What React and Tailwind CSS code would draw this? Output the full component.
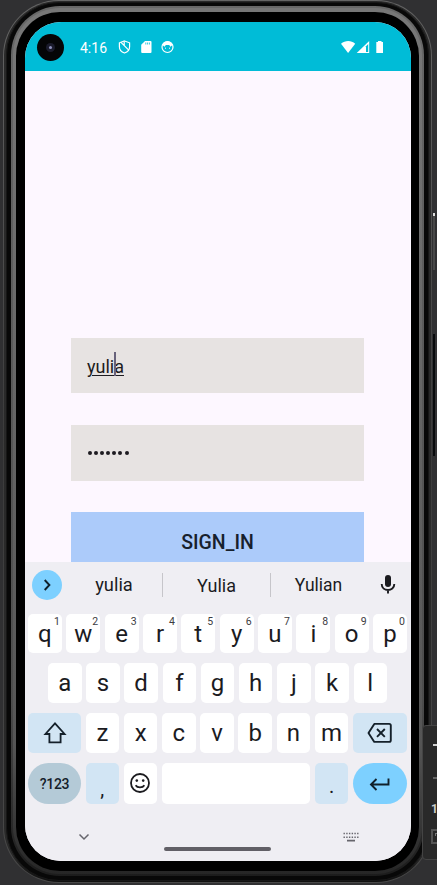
import React from "react";

const hints = ["1", "2", "3", "4", "5", "6", "7", "8", "9", "0"];

function Key({ label, hint, className = "" }) {
  return (
    <div className={`relative flex h-full flex-1 items-center justify-center rounded-[5px] bg-white text-[24px] leading-none text-[#1b1b1f] ${className}`}>
      <span className={hint ? "pt-px" : "pb-px"}>{label}</span>
      {hint && <span className="absolute right-[2px] top-[2px] text-[10.5px] leading-[11px] text-[#3c3c42]">{hint}</span>}
    </div>
  );
}

function StatusBar() {
  return (
    <div className="flex h-[49px] shrink-0 items-center bg-[#00bcd7] pl-[12px] text-white">
      <div className="mt-[2px] flex size-[27px] items-center justify-center rounded-full bg-[#050507]">
        <div className="flex size-[9px] items-center justify-center rounded-full bg-[#1b1b2c]">
          <div className="size-[3px] rounded-full bg-[#8f91bd]" />
        </div>
      </div>
      <span className="ml-[16px] mt-[3px] w-[28px] whitespace-nowrap text-[14px] leading-none">4:16</span>
      <svg className="ml-[10px]" width="13" height="14" viewBox="0 0 13 14" fill="none" stroke="currentColor" strokeWidth="1.2">
        <path d="M6.5 1L11.6 2.8V6.8C11.6 9.8 9.5 12 6.5 13C3.5 12 1.4 9.8 1.4 6.8V2.8Z" />
        <path d="M3 2.3L11 10.3M6.2 1.6V5.2" />
      </svg>
      <svg className="ml-[9.5px]" width="11" height="14" viewBox="0 0 11 14">
        <path fill="currentColor" d="M4 1H9.5Q10.5 1 10.5 2V12Q10.5 13 9.5 13H1.2Q.2 13 .2 12V4.7Z" />
        <path stroke="#00bcd7" strokeWidth=".8" d="M4.8 2.5V4.5M6.6 2.5V4.5M8.4 2.5V4.5" />
      </svg>
      <svg className="ml-[9.5px]" width="13" height="14" viewBox="0 0 13 14" fill="none" stroke="currentColor">
        <circle cx="6.5" cy="7" r="5.5" strokeWidth="1.2" />
        <path fill="currentColor" stroke="none" d="M1.4 5C2.5 2.5 4.2 1.3 6.5 1.3S10.5 2.5 11.6 5L9.4 6.7L8.2 5H4.8L3.6 6.7Z" />
        <path d="M4 8.2H5M8 8.2H9" />
      </svg>
      <svg className="ml-[167px]" width="44" height="14" viewBox="0 0 44 14" fill="currentColor">
        <path d="M0 3.7C4.2.2 10.2.2 14.2 3.7L7.1 12.9Z" />
        <path d="M28.2 1V13H15.7Z" />
        <path d="M25 6.2L27.2 4V12H25Z" fill="#00bcd7" />
        <path d="M37 1H40.5V2H42V13H35.3V2H37Z" />
      </svg>
    </div>
  );
}

function Keyboard() {
  return (
    <div className="flex h-[299px] shrink-0 flex-col bg-[#efeef3] pl-[3px] pr-[4px] pt-px text-[#1b1b1f]">
      <div className="flex h-[44px] items-center">
        <div className="ml-[4px] flex size-[30px] shrink-0 items-center justify-center rounded-full bg-[#7dd0ff]">
          <svg width="30" height="30" viewBox="0 0 30 30" fill="none" stroke="#10202b" strokeWidth="1.9"><path d="M12.7 10L17.4 15L12.7 20" /></svg>
        </div>
        <div className="flex h-[24px] w-[101px] items-center justify-center border-r border-[#c6c5ca] pl-[4px] text-[18.3px]">yulia</div>
        <div className="flex h-[24px] w-[108px] items-center justify-center border-r border-[#c6c5ca] text-[18px]">Yulia</div>
        <div className="flex h-[24px] w-[95px] items-center justify-center text-[17.5px]">Yulian</div>
        <svg className="ml-[12px] shrink-0" width="20" height="22" viewBox="0 0 20 22" fill="none" stroke="#1b1b1f" strokeWidth="1.9">
          <rect x="7" y="1" width="6" height="12" rx="3" fill="#1b1b1f" stroke="none" />
          <path d="M3.7 10C3.7 17.9 16.3 17.9 16.3 10M10 15.5V19.5" />
        </svg>
      </div>
      <div className="mt-[7px] flex h-[39px] gap-[4.5px]">
        {"qwertyuiop".split("").map((letter, i) => <Key key={letter} label={letter} hint={hints[i]} />)}
      </div>
      <div className="mt-[10px] flex h-[40px] gap-[4.7px] px-[20px]">
        {"asdfghjkl".split("").map((letter) => <Key key={letter} label={letter} />)}
      </div>
      <div className="mt-[10px] flex h-[40px] gap-[4.6px]">
        <div className="flex w-[53px] items-center justify-center rounded-[5px] bg-[#d2e5f4]">
          <svg width="24" height="24" viewBox="0 0 24 24" fill="none" stroke="#14202a" strokeWidth="1.8"><path d="M12 2.3L21.6 13H17.6V21.4H6.4V13H2.4Z" /></svg>
        </div>
        {"zxcvbnm".split("").map((letter) => <Key key={letter} label={letter} />)}
        <div className="flex w-[54px] items-center justify-center rounded-[5px] bg-[#d2e5f4]">
          <svg width="26" height="22" viewBox="0 0 26 22" fill="none" stroke="#14202a" strokeWidth="1.9">
            <path d="M7.3 1.9H22.2Q23.8 1.9 23.8 3.5V18.3Q23.8 19.9 22.2 19.9H7.3L1.5 10.9Z" strokeLinejoin="round" />
            <path d="M10 7L17.8 14.8M17.8 7L10 14.8" />
          </svg>
        </div>
      </div>
      <div className="mt-[10px] flex h-[41px] gap-[4.6px]">
        <div className="flex w-[53px] items-center justify-center rounded-full bg-[#b4cad7] pt-px text-[14px] font-medium tracking-[-0.35px] text-[#14202a]">?123</div>
        <div className="flex w-[33.4px] items-center justify-center rounded-[5px] bg-[#d2e5f4] pt-[11px] text-[20px]">,</div>
        <div className="flex w-[33.4px] items-center justify-center rounded-[5px] bg-white">
          <svg className="mb-px" width="22" height="22" viewBox="0 0 22 22" fill="none" stroke="#1b1b1f" strokeWidth="1.8">
            <circle cx="11" cy="11" r="9" /><path d="M6.6 13.2C8.4 16.1 13.6 16.1 15.4 13.2" />
            <circle cx="7.8" cy="8.6" r="1.3" fill="#1b1b1f" stroke="none" /><circle cx="14.2" cy="8.6" r="1.3" fill="#1b1b1f" stroke="none" />
          </svg>
        </div>
        <div className="flex-1 rounded-[5px] bg-white" />
        <div className="flex w-[33.6px] items-center justify-center rounded-[5px] bg-[#d2e5f4] pt-[5px] text-[20px]">.</div>
        <div className="flex w-[54px] items-center justify-center rounded-full bg-[#7dd0ff]">
          <svg width="22" height="16" viewBox="0 0 22 16" fill="none" stroke="#10202b" strokeWidth="1.9"><path d="M19.5 2.5V8.5H2.3M7.5 3L2 8.5L7.5 14" /></svg>
        </div>
      </div>
      <div className="flex flex-1 pt-[26px]">
        <svg className="ml-[50px] mt-[2px] shrink-0" width="12" height="10" viewBox="0 0 12 10" fill="none" stroke="#66656c" strokeWidth="1.5"><path d="M1.5 2.5L6 7L10.5 2.5" /></svg>
        <div className="ml-[74px] mt-[17px] h-[4px] w-[107px] rounded-full bg-[#615f66]" />
        <svg className="ml-[72px] mt-[2px] shrink-0" width="17" height="12" viewBox="0 0 17 12" stroke="#66656c" fill="none">
          <path d="M.5 1.5H15.5M.5 5.2H15.5" strokeWidth="1.4" strokeDasharray="1.4 1.32" /><path d="M4 8.7H12" strokeWidth="1.8" />
        </svg>
      </div>
    </div>
  );
}

export default function App() {
  return (
    <div className="relative h-[885px] w-[437px] overflow-hidden bg-[#303032] pl-[3px] font-['Roboto','Open_Sans',sans-serif]">
      <div className="h-[883px] w-[429px] rounded-[56px] bg-linear-to-b from-[#656565] via-[#3b3b3b] to-[#484848] p-px">
        <div className="h-full rounded-[55px] bg-linear-to-b from-[#292929] from-97% to-[#101010] px-[2px] py-px">
          <div className="h-full rounded-[53px] border border-[#171717] bg-[#080808] px-[4px] pb-[4px] pt-[3px]">
            <div className="h-full rounded-[49px] bg-linear-to-b from-[#686868] via-[#4d4d4d] via-80% to-[#1c1c1c] p-[2px]">
              <div className="h-full rounded-[47px] bg-linear-to-b from-[#777777] from-2% via-[#555555] via-85% to-[#262626] px-[3px] pb-[3px] pt-[4px]">
                <div className="h-full rounded-[44px] bg-black pl-[9px] pr-[9px] pt-[10px]">
                  <div className="flex h-[839px] w-[386px] flex-col overflow-hidden rounded-[36px] bg-[#fdf7ff]">
                    <StatusBar />
                    <main className="flex h-[491px] shrink-0 flex-col overflow-hidden pl-[46px] pr-[47px] pt-[267px] text-[#1d1b20]">
                      <div className="flex h-[55px] shrink-0 items-center bg-[#e7e3e2] pl-[16px] pt-[2px] text-[18px]">
                        <span className="relative underline decoration-1 underline-offset-2">yulia<span className="absolute -top-px left-[27px] h-[24px] w-[1.5px] bg-[#68627b]" /></span>
                      </div>
                      <div className="mt-[32px] flex h-[56px] shrink-0 items-center gap-[2.1px] bg-[#e7e3e2] pl-[17px]">
                        {Array.from({ length: 7 }, (_, i) => <span key={i} className="size-[4px] rounded-full bg-[#1d1b20]" />)}
                      </div>
                      <button className="mt-[31px] h-[61px] shrink-0 bg-[#accbfa] text-[19.5px] font-medium text-[#17202c]">SIGN_IN</button>
                    </main>
                    <Keyboard />
                  </div>
                </div>
              </div>
            </div>
          </div>
        </div>
      </div>
      <div className="absolute right-[2px] top-[213px] h-[57px] w-[2px] bg-[#484848]"><div className="h-[3px] bg-[#ddd]" /></div>
      <div className="absolute right-[2px] top-[334px] h-[122px] w-[2px] bg-[#080a0c]" />
      <div className="absolute left-[422px] top-[725px] h-[135px] w-[20px] rounded-[4px] border border-[#444] bg-[#292929]">
        <div className="ml-[10px] mt-[18px] h-[2px] bg-[#d0d0d0]" />
        <div className="ml-[10px] mt-[31px] h-[2px] bg-[#646464]" />
        <div className="ml-[8px] mt-[22px] w-[6px] text-[12px] font-bold leading-[16px] text-[#ccc]">1</div>
        <div className="ml-[8px] mt-[12px] h-[15px] border-2 border-[#555] pl-[2px] pt-[2px]"><div className="size-[3px] border-l border-t border-[#777]" /></div>
      </div>
    </div>
  );
}
